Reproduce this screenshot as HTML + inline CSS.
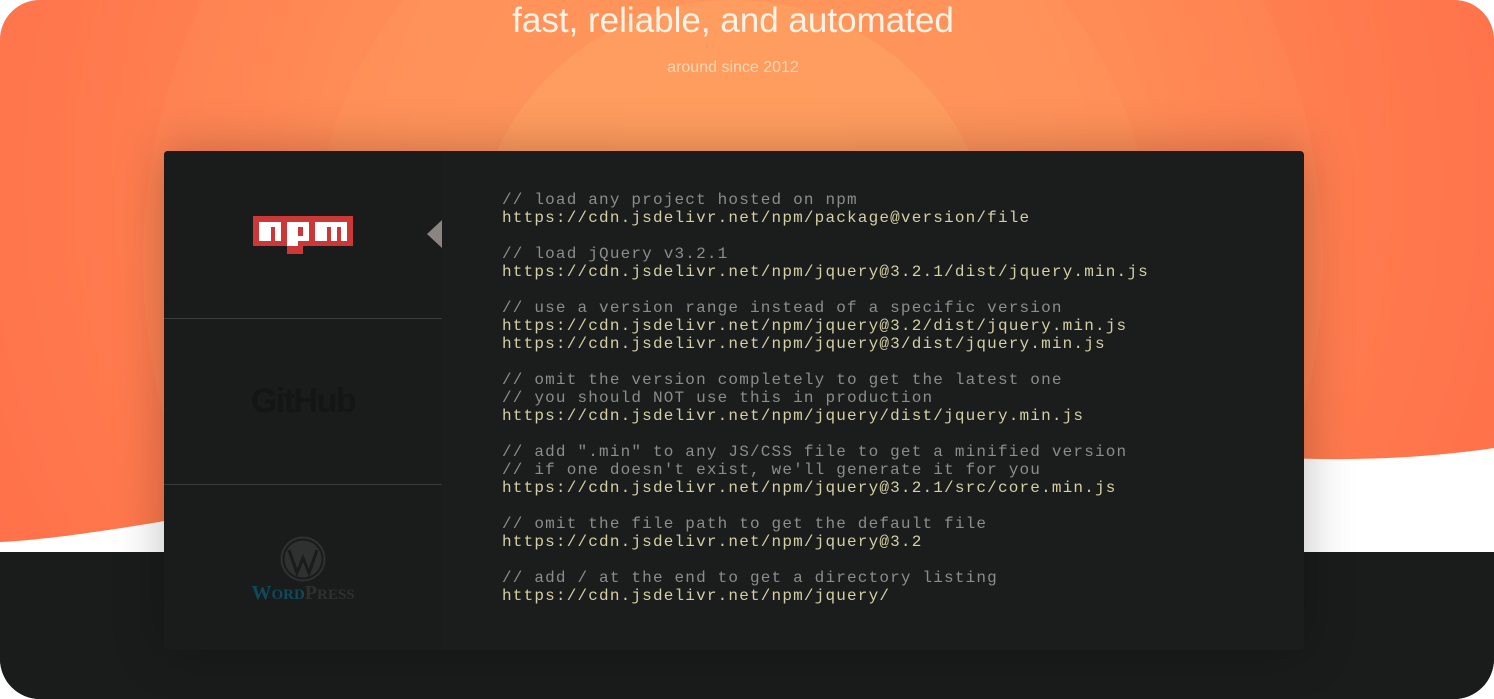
<!DOCTYPE html>
<html><head><meta charset="utf-8"><style>
html,body{margin:0;padding:0;background:#fff;overflow:hidden;width:1494px;height:699px;}
#wrap{position:relative;width:1494px;height:699px;overflow:hidden;border-radius:40px;background:#1a1b1b;}
#hero{position:absolute;left:0;top:0;width:1494px;height:560px;}
h1{position:absolute;top:0;left:0;width:1466px;text-align:center;margin:0;font:300 35px/42px "Liberation Sans",sans-serif;color:#fff3e8;}
.sub{position:absolute;top:58px;left:0;width:1466px;text-align:center;font:16px/20px "Liberation Sans",sans-serif;color:#ffd6b8;}
#card{position:absolute;left:164px;top:151px;width:1140px;height:499px;background:#1b1c1c;border-radius:4px;box-shadow:0 0 50px rgba(0,0,0,0.25);overflow:hidden;}
#side{position:absolute;left:0;top:0;width:278px;height:499px;background:#1a1b1b;}
.div{position:absolute;left:0;width:278px;height:1px;background:#3a3b3b;}
pre{position:absolute;left:338px;top:40px;margin:0;font:16px/18px "Liberation Mono",monospace;letter-spacing:1.18px;color:#d5cfa4;}
.c{color:#8c8c8c;}
</style></head><body>
<div id="wrap">
<svg id="hero" width="1494" height="560" viewBox="0 0 1494 560">
<defs>
<radialGradient id="g" cx="733" cy="180" r="900" gradientUnits="userSpaceOnUse">
<stop offset="0" stop-color="#ffa863"/>
<stop offset="0.3" stop-color="#ff9a5e"/>
<stop offset="0.6" stop-color="#ff8050"/>
<stop offset="1" stop-color="#ff6c48"/>
</radialGradient>
<clipPath id="cl"><path d="M0 0H1494V448C1400 462 1300 462 1200 452C1000 430 600 440 400 480C200 515 80 538 0 542Z"/></clipPath>
</defs>
<rect width="1494" height="560" fill="#fff"/>
<g clip-path="url(#cl)">
<rect width="1494" height="560" fill="url(#g)"/>
<circle cx="733" cy="260" r="590" fill="#ff8a56" opacity="0.45"/>
<circle cx="733" cy="260" r="420" fill="#ff955c" opacity="0.45"/>
<circle cx="733" cy="260" r="260" fill="#ffa363" opacity="0.5"/>
</g>
</svg>
<div style="position:absolute;left:0;top:552px;width:1494px;height:147px;background:#1a1b1b"></div>
<h1>fast, reliable, and automated</h1>
<div class="sub">around since 2012</div>
<div id="card">
<div id="side">
<svg style="position:absolute;left:89px;top:65px" width="100" height="38" viewBox="0 0 100 38">
<path d="M0 0H100V30H50V38H34V30H0Z" fill="#cb3837"/>
<path d="M6 6H28V25H22V11H18V25H6ZM34 6H56V25H45V30H34ZM45 11V20H50V11ZM62 6H94V25H88V11H84V25H78V11H74V25H62Z" fill="#fff"/>
</svg>
<svg style="position:absolute;left:263px;top:69px" width="15" height="28"><path d="M15 0V28L0 14Z" fill="#8a8580"/></svg>
<div class="div" style="top:167px"></div>
<div style="position:absolute;left:0;top:230px;width:278px;text-align:center;font:bold 34px/40px 'Liberation Sans',sans-serif;color:#141515;letter-spacing:-1.5px">GitHub</div>
<div class="div" style="top:333px"></div>
<svg style="position:absolute;left:116px;top:385px" width="46" height="46"><circle cx="23" cy="23" r="21.5" fill="none" stroke="#2f3030" stroke-width="2"/><circle cx="23" cy="23" r="18.5" fill="#2f3030"/><path d="M9 14L17 37L23 22L29 37L37 14" stroke="#1a1b1b" stroke-width="3" fill="none"/></svg>
<div style="position:absolute;left:0;top:431px;width:278px;text-align:center;font:bold 20px/22px 'Liberation Serif',serif;"><span style="color:#0d4a5e">W<span style="font-size:15px">ORD</span></span><span style="color:#2f3030">P<span style="font-size:15px">RESS</span></span></div>
</div>
<pre><span class="c">// load any project hosted on npm</span>
https://cdn.jsdelivr.net/npm/package@version/file

<span class="c">// load jQuery v3.2.1</span>
https://cdn.jsdelivr.net/npm/jquery@3.2.1/dist/jquery.min.js

<span class="c">// use a version range instead of a specific version</span>
https://cdn.jsdelivr.net/npm/jquery@3.2/dist/jquery.min.js
https://cdn.jsdelivr.net/npm/jquery@3/dist/jquery.min.js

<span class="c">// omit the version completely to get the latest one</span>
<span class="c">// you should NOT use this in production</span>
https://cdn.jsdelivr.net/npm/jquery/dist/jquery.min.js

<span class="c">// add ".min" to any JS/CSS file to get a minified version</span>
<span class="c">// if one doesn't exist, we'll generate it for you</span>
https://cdn.jsdelivr.net/npm/jquery@3.2.1/src/core.min.js

<span class="c">// omit the file path to get the default file</span>
https://cdn.jsdelivr.net/npm/jquery@3.2

<span class="c">// add / at the end to get a directory listing</span>
https://cdn.jsdelivr.net/npm/jquery/</pre>
</div>
</div>
</body></html>
